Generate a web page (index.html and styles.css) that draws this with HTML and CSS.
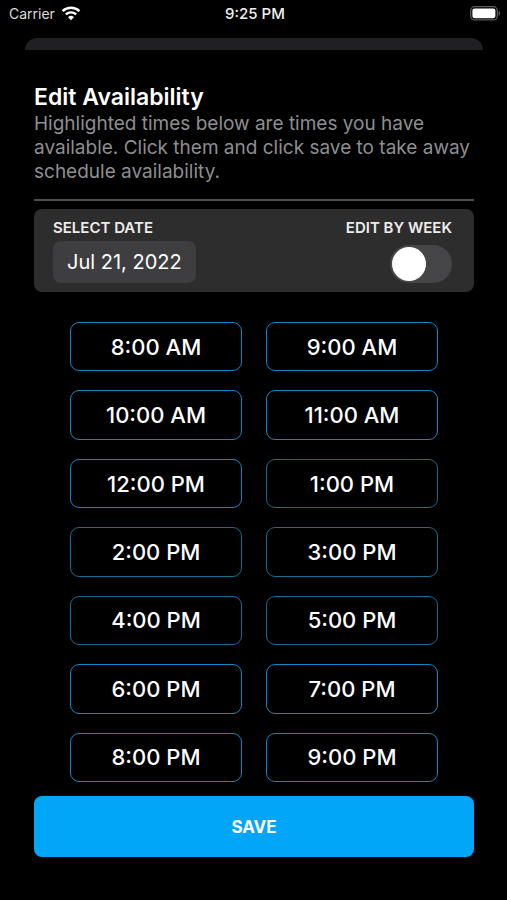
FILE: index.html
```html
<!DOCTYPE html>
<html lang="en">
<head>
<meta charset="utf-8">
<meta name="viewport" content="width=device-width, initial-scale=1">
<title>Edit Availability</title>
<link rel="stylesheet" href="styles.css">
</head>
<body>
<div class="screen">
  <header class="status">
    <div class="carrier">
      <span>Carrier</span>
      <svg width="20" height="15" viewBox="0 0 20 15" fill="none" stroke="#fff" aria-hidden="true">
        <path d="M1.6 5.1a12.2 12.2 0 0 1 16.8 0" stroke-width="2.6"/>
        <path d="M4.8 8.4a7.6 7.6 0 0 1 10.4 0" stroke-width="2.4"/>
        <path d="M10 14.2 7.1 11.2a4.2 4.2 0 0 1 5.8 0Z" fill="#fff" stroke="none"/>
      </svg>
    </div>
    <span class="clock">9:25 PM</span>
    <svg class="battery" width="31" height="15" viewBox="0 0 31 15" aria-hidden="true">
      <rect x="0.7" y="0.7" width="26.6" height="13.2" rx="4" fill="none" stroke="#5c5c5e" stroke-width="1.3"/>
      <rect x="2.4" y="2.4" width="23" height="9.8" rx="2.2" fill="#fff"/>
      <path d="M28.6 5c2 .6 2 4.200 0 4.800Z" fill="#5c5c5e"/>
    </svg>
  </header>
  <div class="sheet-behind"></div>
  <main class="content">
    <h1>Edit Availability</h1>
    <p class="intro">Highlighted times below are times you have available. Click them and click save to take away schedule availability.</p>
    <hr>
    <section class="panel">
      <div class="field">
        <label for="date">SELECT DATE</label>
        <button class="date" id="date" type="button">Jul 21, 2022</button>
      </div>
      <div class="field field-end">
        <label for="week">EDIT BY WEEK</label>
        <input class="switch" id="week" type="checkbox" role="switch">
      </div>
    </section>
    <div class="times">
      <button type="button">8:00 AM</button>
      <button type="button">9:00 AM</button>
      <button type="button">10:00 AM</button>
      <button type="button">11:00 AM</button>
      <button type="button">12:00 PM</button>
      <button type="button" class="dim">1:00 PM</button>
      <button type="button" class="dim">2:00 PM</button>
      <button type="button" class="dim">3:00 PM</button>
      <button type="button" class="dim">4:00 PM</button>
      <button type="button" class="dim">5:00 PM</button>
      <button type="button">6:00 PM</button>
      <button type="button">7:00 PM</button>
      <button type="button">8:00 PM</button>
      <button type="button">9:00 PM</button>
    </div>
    <button class="save" type="button">SAVE</button>
  </main>
</div>
</body>
</html>
```
FILE: styles.css
```css
* {
  box-sizing: border-box;
}

body {
  margin: 0;
  background: #000;
  color: #fff;
  font-family: Inter, "Liberation Sans", sans-serif;
}

button {
  margin: 0;
  padding: 0;
  border: 0;
  color: inherit;
  font-family: inherit;
}

.screen {
  display: flex;
  flex-direction: column;
  min-height: 100vh;
}

.status {
  display: grid;
  grid-template-columns: 1fr auto 1fr;
  align-items: center;
  height: 27px;
  padding: 0 6px 0 9px;
  font-size: 14px;
}

.carrier {
  display: flex;
  align-items: center;
  gap: 6px;
  color: #dcdcdc;
}

.clock {
  font-size: 15px;
  font-weight: 500;
  color: #f0f0f0;
}

.battery {
  justify-self: end;
}

.sheet-behind {
  height: 12px;
  margin: 11px 24px 0 25px;
  border-radius: 12px 12px 0 0;
  background: #202022;
}

.content {
  display: flex;
  flex: 1;
  flex-direction: column;
  padding: 33px 33px 43px 34px;
}

h1 {
  margin: 0;
  font-size: 23px;
  font-weight: 600;
  line-height: 29px;
}

.intro {
  margin: 0;
  color: #8e8e93;
  font-size: 19px;
  line-height: 24px;
}

hr {
  width: 100%;
  height: 2px;
  margin: 15px 0 8px;
  border: 0;
  background: #505050;
}

.panel {
  display: flex;
  justify-content: space-between;
  padding: 9px 22px 9px 19px;
  border-radius: 8px;
  background: #2d2d2d;
}

.field {
  display: flex;
  flex-direction: column;
  align-items: flex-start;
  gap: 4px;
}

.field-end {
  align-items: flex-end;
}

.field label {
  color: #ececec;
  font-size: 15px;
  font-weight: 600;
  line-height: 19px;
}

.date {
  height: 42px;
  padding: 0 14px;
  border-radius: 8px;
  background: #3e3e40;
  font-size: 20px;
}

.switch {
  display: flex;
  align-items: center;
  width: 62px;
  height: 38px;
  margin: 4px 0 0;
  padding: 2px;
  border-radius: 19px;
  background: #464649;
  appearance: none;
}

.switch::before {
  width: 34px;
  height: 34px;
  border-radius: 50%;
  background: #fff;
  content: "";
}

.switch:checked {
  justify-content: flex-end;
  background: #02a6f9;
}

.times {
  display: grid;
  flex: 1;
  grid-template-columns: 1fr 1fr;
  grid-auto-rows: 1fr;
  gap: 19px 24px;
  margin: 30px 36px 14px;
}

.times button {
  min-height: 44px;
  border: 1px solid #1086c4;
  border-radius: 9px;
  background: #000;
  font-size: 22px;
  font-weight: 500;
}

.times .dim {
  border-color: #146c8e;
}

.save {
  height: 61px;
  border-radius: 8px;
  background: #02a6f9;
  font-size: 17px;
  font-weight: 700;
}
```
